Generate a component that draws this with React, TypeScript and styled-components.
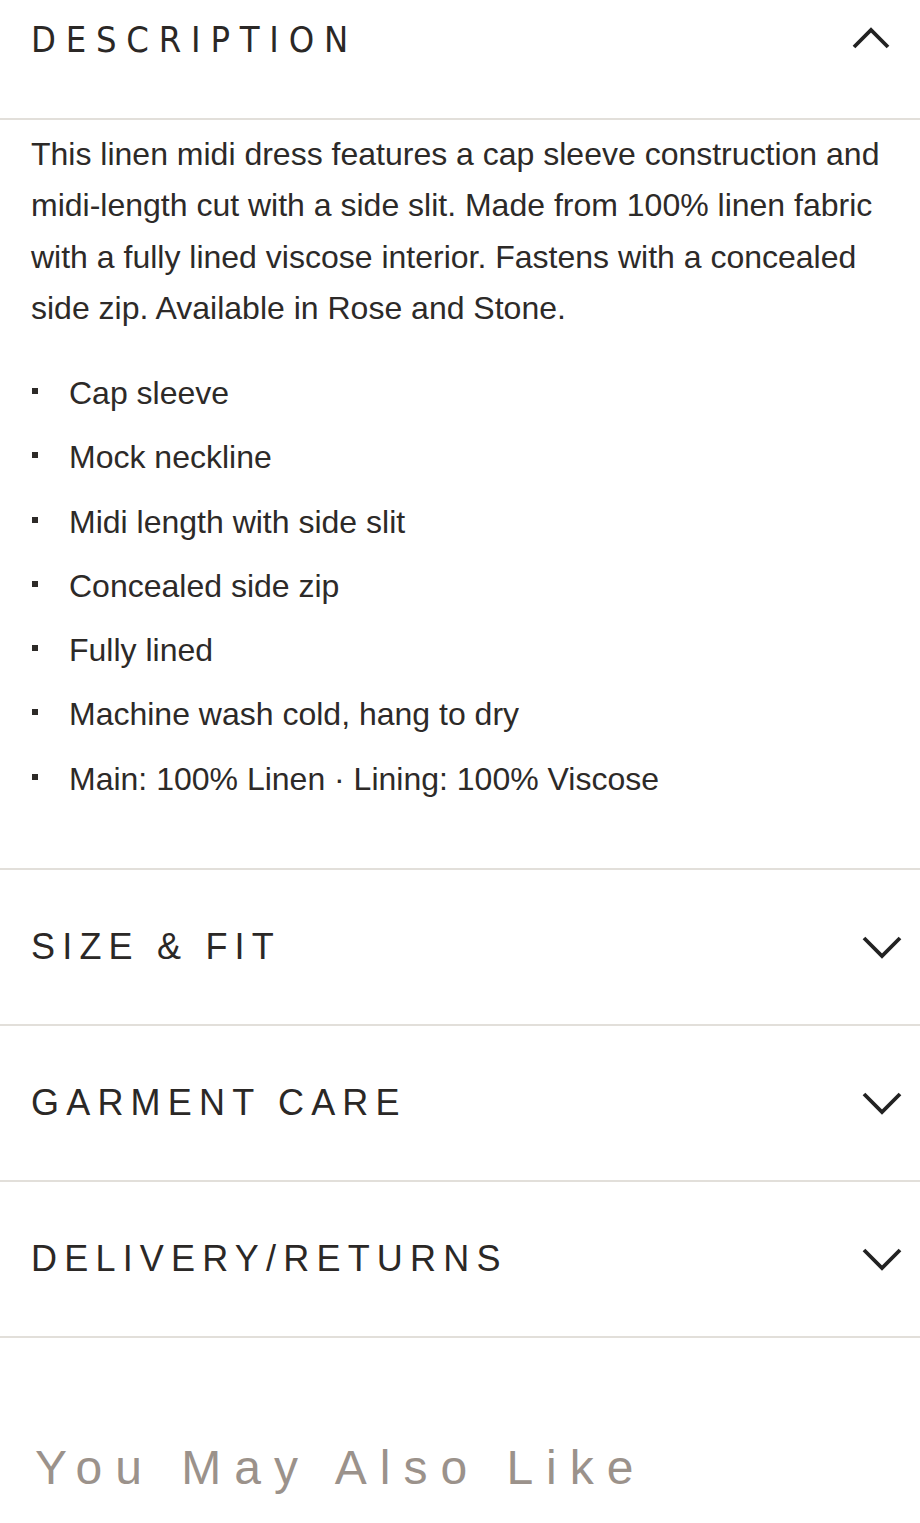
import styled, {createGlobalStyle} from "styled-components";

const GlobalStyle = createGlobalStyle`
  html, body {
    margin: 0;
    padding: 0;
    background: #ffffff;
  }

  body {
    font-family: "Liberation Sans", Arial, sans-serif;
    color: #2d2a28;
  }
`

const bullets: string[] = [
    "Cap sleeve",
    "Mock neckline",
    "Midi length with side slit",
    "Concealed side zip",
    "Fully lined",
    "Machine wash cold, hang to dry",
    "Main: 100% Linen · Lining: 100% Viscose",
]

const closedSections: string[] = ["SIZE & FIT", "GARMENT CARE", "DELIVERY/RETURNS"]

function Chevron({up}: { up?: boolean }) {
    return (
        <ChevronSvg width="40" height="24" viewBox="0 0 40 24" $up={up}>
            <polyline
                points={up ? "2,21 19,4 36,21" : "2,3 20,21 38,3"}
                fill="none"
                stroke="#222"
                strokeWidth="3.8"
            />
        </ChevronSvg>
    )
}

export default function App() {
    return (
        <>
            <GlobalStyle/>
            <Page>
                <Item>
                    <OpenHeader>
                        <Title $condensed>DESCRIPTION</Title>
                        <Chevron up/>
                    </OpenHeader>
                    <Body>
                        <Paragraph>
                            This linen midi dress features a cap sleeve construction and midi-length cut with a
                            side slit. Made from 100% linen fabric with a fully lined viscose interior. Fastens
                            with a concealed side zip. Available in Rose and Stone.
                        </Paragraph>
                        <BulletList>
                            {bullets.map((text, index: number) =>
                                <Bullet key={index}>{text}</Bullet>)}
                        </BulletList>
                    </Body>
                </Item>
                {closedSections.map((title, index: number) =>
                    <Item key={index}>
                        <Header>
                            <Title>{title}</Title>
                            <Chevron/>
                        </Header>
                    </Item>)}
                <AlsoLike>You May Also Like</AlsoLike>
            </Page>
        </>
    )
}

const Page = styled.main`
  width: 920px;
  display: flex;
  flex-direction: column;
`

const Item = styled.section`
  border-bottom: 2px solid #e2dfda;
`

const Header = styled.div`
  height: 154px;
  display: flex;
  align-items: center;
  justify-content: space-between;
  padding: 0 18px 0 31px;
  box-sizing: border-box;
`

const OpenHeader = styled.div`
  height: 120px;
  display: flex;
  align-items: flex-start;
  justify-content: space-between;
  padding: 20px 28px 0 31px;
  box-sizing: border-box;
  border-bottom: 2px solid #e2dfda;
`

const Title = styled.h2<{ $condensed?: boolean }>`
  margin: 0;
  font-family: ${props => props.$condensed
          ? `"Liberation Sans Narrow", "DejaVu Sans Condensed", "Liberation Sans", sans-serif`
          : `"Liberation Sans", Arial, sans-serif`};
  font-weight: 400;
  font-size: 36px;
  line-height: 40px;
  letter-spacing: ${props => props.$condensed ? "9.8px" : "7.2px"};
  color: #2b2826;
`

const ChevronSvg = styled.svg<{ $up?: boolean }>`
  display: block;
  margin-top: ${props => props.$up ? "6px" : "0"};
`

const Body = styled.div`
  padding: 8.5px 31px 70px 31px;
`

const Paragraph = styled.p`
  margin: 0;
  font-size: 32px;
  line-height: 51.5px;
  color: #2d2a28;
`

const BulletList = styled.ul`
  list-style: none;
  margin: 40.5px 0 0 0;
  padding: 0;
  display: flex;
  flex-direction: column;
  gap: 27.3px;
`

const Bullet = styled.li`
  position: relative;
  padding-left: 38px;
  font-size: 32px;
  line-height: 37px;
  color: #2d2a28;

  &::before {
    content: "";
    position: absolute;
    left: 1px;
    top: 13px;
    width: 6px;
    height: 6px;
    background: #2d2a28;
  }
`

const AlsoLike = styled.h3`
  margin: 0;
  padding: 100px 0 0 35px;
  font-family: "Liberation Sans", Arial, sans-serif;
  font-weight: 400;
  font-size: 48px;
  line-height: 60px;
  letter-spacing: 13px;
  color: #9b928b;
`
